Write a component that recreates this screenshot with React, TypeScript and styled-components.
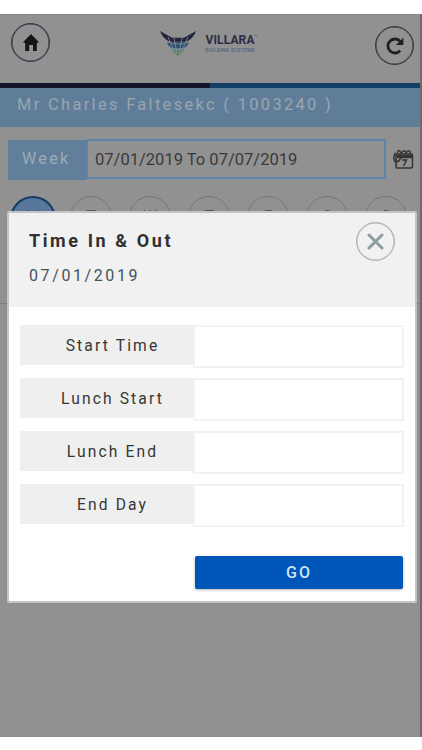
import React from "react";
import styled, { createGlobalStyle } from "styled-components";

const GlobalStyle = createGlobalStyle`
  *, *::before, *::after { box-sizing: border-box; }
  body { margin: 0; background: #fff; font-family: Roboto, "Liberation Sans", sans-serif; }
  button, input { font-family: inherit; }
`;

const Page = styled.div`
  height: 750px;
  padding-top: 14px;
  overflow: hidden;
`;

const Screen = styled.div`
  position: relative;
  width: 422px;
  height: 723px;
  background: #919191;
  border-top: 1px solid #858585;
  border-right: 2px solid #6b6b6b;
  border-bottom: 1px solid #8b8d98;
`;

const TopBar = styled.header`
  height: 68px;
  padding: 8px 6px 0 11px;
  display: flex;
  justify-content: space-between;
  align-items: flex-start;
`;

const RoundButton = styled.button<{ $color: string; $top: number }>`
  width: 39px;
  height: 39px;
  margin-top: ${(p) => p.$top}px;
  padding: 0;
  display: grid;
  place-items: center;
  border: 1px solid ${(p) => p.$color};
  box-shadow: inset 0 0 0 0.5px ${(p) => p.$color};
  border-radius: 50%;
  background: transparent;
`;

const Brand = styled.div`
  display: flex;
  align-items: flex-start;
  gap: 10px;
  width: 106px;
  margin: 8px 0 0;
`;

const BrandText = styled.div`
  padding-top: 3px;
`;

const BrandName = styled.div`
  display: flex;
  font-size: 12px;
  line-height: 12px;
  font-weight: 700;
  letter-spacing: 0.12px;
  color: #2c2d45;
`;

const Mark = styled.span`
  font-size: 4px;
  line-height: 5px;
`;

const BrandTag = styled.div`
  margin-top: 1px;
  font-size: 5px;
  line-height: 6px;
  font-weight: 500;
  letter-spacing: 0.22px;
  white-space: nowrap;
  color: #506483;
`;

const Stripe = styled.div`
  height: 5px;
  display: grid;
  grid-template-columns: 1fr 1fr;
  background: #113f66;
  &::before { content: ""; background: #15152b; }
`;

const Banner = styled.div`
  height: 39px;
  padding: 5px 0 0 17px;
  background: #5f7d99;
  color: #9aa5b0;
  font-size: 16.4px;
  line-height: 24px;
  letter-spacing: 2.35px;
  white-space: nowrap;
`;

const WeekRow = styled.div`
  display: flex;
  align-items: flex-start;
  padding: 12px 0 0 8px;
`;

const WeekLabel = styled.div`
  width: 78px;
  height: 40px;
  margin-top: 1px;
  padding-left: 14px;
  background: #617f9b;
  color: #9dabb7;
  font-size: 16px;
  line-height: 37px;
  letter-spacing: 2.4px;
`;

const WeekValue = styled.div`
  width: 300px;
  height: 40px;
  padding-left: 7px;
  border: 2px solid #5c83a8;
  color: #3a3a3a;
  font-size: 16.55px;
  line-height: 37px;
`;

const CalendarIcon = styled.svg`
  margin: 10px 0 0 7px;
`;

const Days = styled.div`
  display: flex;
  padding: 16px 0 0 10px;
  height: 124px;
  border-bottom: 1px solid #7d7d7d;
`;

const Day = styled.div<{ $active?: boolean }>`
  flex: none;
  width: ${(p) => (p.$active ? 46 : 42)}px;
  height: ${(p) => (p.$active ? 46 : 42)}px;
  margin-right: ${(p) => (p.$active ? 14 : 17)}px;
  border: ${(p) => (p.$active ? "2px solid #133b63" : "1px solid #777")};
  border-radius: 50%;
  background: ${(p) => (p.$active ? "#57789a" : "transparent")};
  color: #555;
  font-size: 16px;
  line-height: ${(p) => (p.$active ? 37 : 39)}px;
  text-align: center;
`;

const Dialog = styled.section`
  position: absolute;
  left: 7px;
  top: 196px;
  width: 410px;
  height: 392px;
  border: 2px solid #c4c4c4;
  border-radius: 2px;
  background: #fff;
`;

const DialogHeader = styled.div`
  height: 94px;
  padding: 9px 20px 0 20px;
  display: flex;
  justify-content: space-between;
  align-items: flex-start;
  background: #f1f1f1;
`;

const Title = styled.h1`
  margin: 7px 0 0;
  font-size: 18px;
  line-height: 24px;
  font-weight: 700;
  letter-spacing: 2.6px;
  color: #303030;
`;

const DateText = styled.div`
  margin-top: 11px;
  font-size: 16px;
  line-height: 24px;
  letter-spacing: 2.6px;
  color: #43525d;
`;

const Form = styled.form`
  padding: 18px 11px 0;
  display: flex;
  flex-direction: column;
  gap: 10px;
`;

const Field = styled.label`
  height: 43px;
  display: flex;
`;

const FieldName = styled.span`
  width: 173px;
  height: 40px;
  padding-left: 12px;
  background: #efefef;
  color: #363636;
  font-size: 15.6px;
  line-height: 42px;
  letter-spacing: 2.15px;
  text-align: center;
`;

const Input = styled.input`
  width: 211px;
  height: 43px;
  border: 2px solid #f2f2f2;
  background: #fff;
`;

const GoButton = styled.button`
  align-self: flex-end;
  width: 208px;
  height: 33px;
  margin: 19px 1px 0 0;
  padding: 0;
  border: 0;
  border-radius: 2px;
  background: #0055b8;
  box-shadow: 0 1px 3px rgba(0, 0, 0, 0.3);
  color: #cfe3fa;
  font-size: 16px;
  font-weight: 500;
  line-height: 33px;
  letter-spacing: 2.1px;
`;

const HomeGlyph = () => (
  <svg width="16" height="17" viewBox="0 0 16 17" fill="#151515">
    <path d="M8 0 L16 8.2 L13.8 9 V17 H10 V11 H6.2 V17 H2.2 V9 L0 8.2 Z" />
  </svg>
);

const ReloadGlyph = () => (
  <svg width="18" height="18" viewBox="0 0 18 18" fill="none">
    <path d="M14.2 13.6 A7 7 0 1 1 14.2 4.4" stroke="#202020" strokeWidth="2.8" />
    <path d="M17.4 0.6 V7.9 H10.1 Z" fill="#202020" />
  </svg>
);

const CloseGlyph = () => (
  <svg width="17" height="17" viewBox="0 0 17 17" stroke="#8d9c9e" strokeWidth="3" strokeLinecap="round">
    <path d="M2 2 L15 15 M15 2 L2 15" />
  </svg>
);

const BrandGlyph = () => (
  <svg width="36" height="25" viewBox="0 0 36 25">
    <path d="M0 0 L12 6.8 H24 L36 0 Q34 6 28 10 L24.5 10.8 H11.5 L8 10 Q2 6 0 0Z" fill="#22243d" />
    <path d="M7 11 L28.8 11 Q28 15 24 17 H12 Q8 15 7 11Z" fill="#2c5376" />
    <path d="M10.5 17 H25.5 L23 20 H13 Z" fill="#4c7f91" />
    <path d="M12 20 H24 L18 25 Z" fill="#5e8060" />
    <path d="M8 6 L15 22 M14 7 L17 23 M22 7 L19 23 M28 6 L21 22 M7 11 Q18 15 29 11 M10 17 Q18 20 26 17" fill="none" stroke="#919191" strokeWidth="0.8" />
  </svg>
);

const days = ["M", "T", "W", "T", "F", "S", "S"];
const fields = ["Start Time", "Lunch Start", "Lunch End", "End Day"];

export default function App() {
  return (
    <Page>
      <GlobalStyle />
      <Screen>
        <TopBar>
          <RoundButton $color="#303044" $top={0} aria-label="Home"><HomeGlyph /></RoundButton>
          <Brand>
            <BrandGlyph />
            <BrandText>
              <BrandName>VILLARA<Mark>™</Mark></BrandName>
              <BrandTag>BUILDING SYSTEMS</BrandTag>
            </BrandText>
          </Brand>
          <RoundButton $color="#333333" $top={3} aria-label="Reload"><ReloadGlyph /></RoundButton>
        </TopBar>
        <Stripe />
        <Banner>Mr Charles Faltesekc ( 1003240 )</Banner>
        <WeekRow>
          <WeekLabel>Week</WeekLabel>
          <WeekValue>07/01/2019 To 07/07/2019</WeekValue>
          <CalendarIcon width="21" height="21" viewBox="0 0 21 21" fill="none" stroke="#353535" strokeWidth="1.5">
            <rect x="3" y="5" width="16.5" height="14" rx="1.5" />
            <path d="M4 7.5 H19" strokeWidth="3.4" />
            <path d="M4 4 Q6 -1 8 4 M8 5 Q11 -1 13 4 M13 4 Q16 -1 18 5" />
            <path d="M2.5 4 Q-0.5 9 2 12.5 Q5 14 8 9 M9 11 H13.5 L10.5 17" />
          </CalendarIcon>
        </WeekRow>
        <Days>
          {days.map((day, i) => <Day key={i} $active={i === 0}>{day}</Day>)}
        </Days>
        <Dialog role="dialog" aria-label="Time In & Out">
          <DialogHeader>
            <div>
              <Title>Time In &amp; Out</Title>
              <DateText>07/01/2019</DateText>
            </div>
            <RoundButton $color="#aeaeae" $top={0} aria-label="Close"><CloseGlyph /></RoundButton>
          </DialogHeader>
          <Form>
            {fields.map((name) => (
              <Field key={name}>
                <FieldName>{name}</FieldName>
                <Input />
              </Field>
            ))}
            <GoButton type="button">GO</GoButton>
          </Form>
        </Dialog>
      </Screen>
    </Page>
  );
}
